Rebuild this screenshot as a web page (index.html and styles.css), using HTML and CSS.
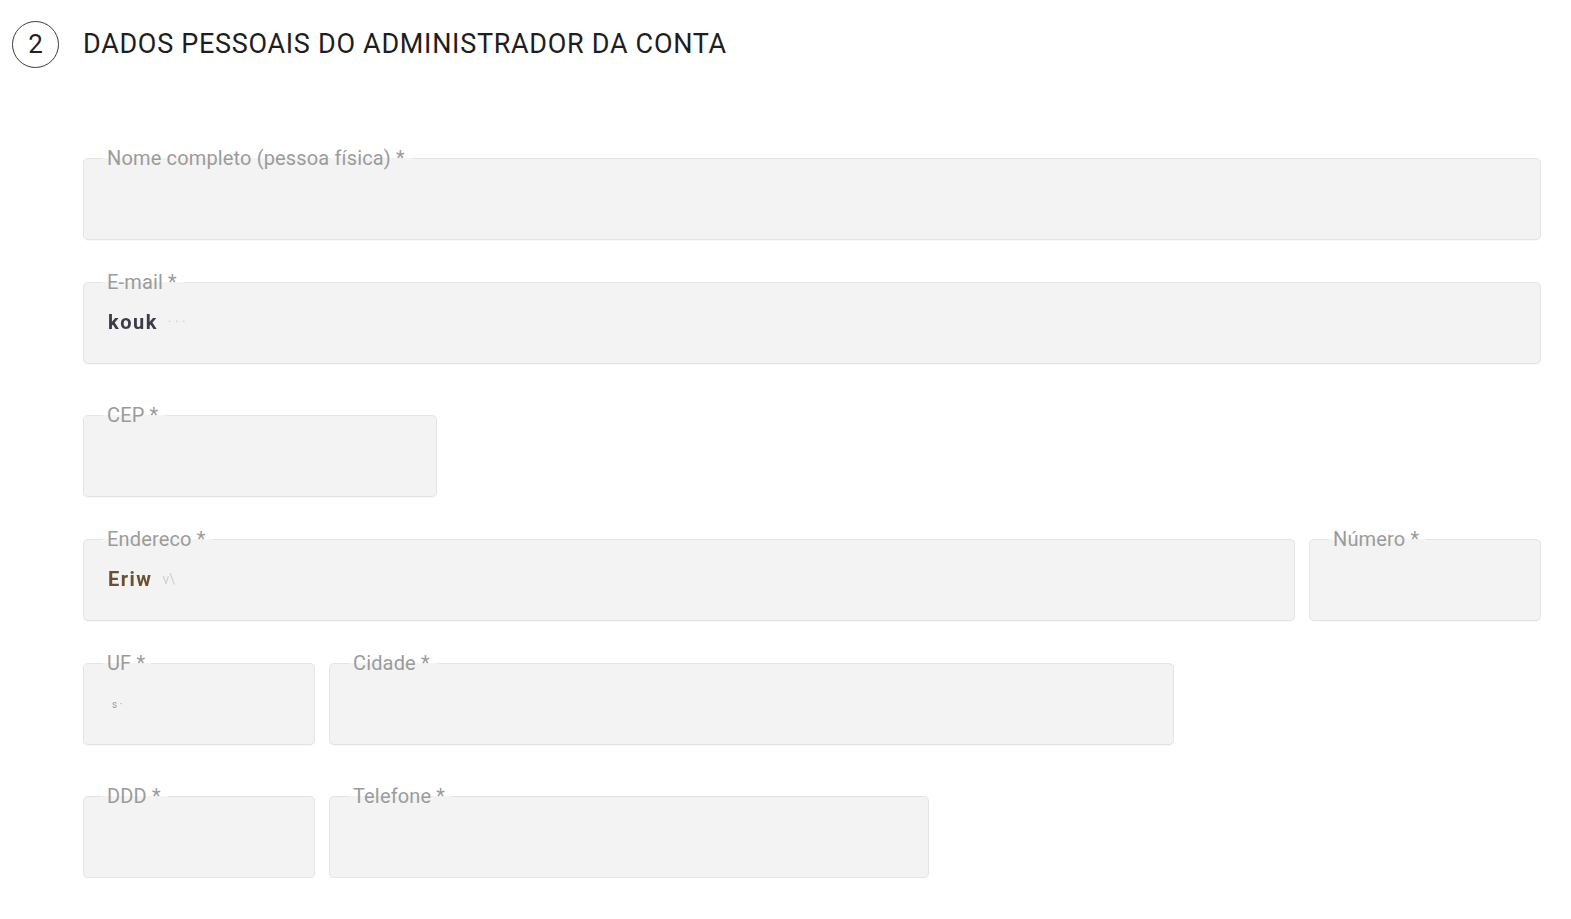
FILE: index.html
```html
<!DOCTYPE html>
<html lang="pt-BR">
<head>
<meta charset="utf-8">
<title>Dados pessoais</title>
<link rel="stylesheet" href="styles.css">
</head>
<body>
<div class="page">
  <header class="section-head">
    <div class="step">2</div>
    <h2 class="section-title">DADOS PESSOAIS DO ADMINISTRADOR DA CONTA</h2>
  </header>

  <form class="form">
    <div class="row gap-a">
      <fieldset class="field w-full">
        <legend>Nome completo (pessoa física) *</legend>
        <div class="value"></div>
      </fieldset>
    </div>

    <div class="row gap-b">
      <fieldset class="field w-full">
        <legend>E-mail *</legend>
        <div class="value"><span class="masked">kouk</span><span class="masked-faint">· · ·</span></div>
      </fieldset>
    </div>

    <div class="row gap-a">
      <fieldset class="field w-cep">
        <legend>CEP *</legend>
        <div class="value"></div>
      </fieldset>
    </div>

    <div class="row gap-a">
      <fieldset class="field w-end">
        <legend>Endereco *</legend>
        <div class="value"><span class="masked masked-brown">Eriw</span><span class="masked-faint">v\</span></div>
      </fieldset>
      <fieldset class="field w-num">
        <legend>Número *</legend>
        <div class="value"></div>
      </fieldset>
    </div>

    <div class="row gap-b">
      <fieldset class="field w-uf">
        <legend>UF *</legend>
        <div class="value"><span class="masked-tiny">s ·</span></div>
      </fieldset>
      <fieldset class="field w-cidade">
        <legend>Cidade *</legend>
        <div class="value"></div>
      </fieldset>
    </div>

    <div class="row">
      <fieldset class="field w-uf">
        <legend>DDD *</legend>
        <div class="value"></div>
      </fieldset>
      <fieldset class="field w-tel">
        <legend>Telefone *</legend>
        <div class="value"></div>
      </fieldset>
    </div>
  </form>
</div>
</body>
</html>
```

FILE: styles.css
```css
html, body {
  margin: 0;
  padding: 0;
  background: #ffffff;
}

body {
  font-family: Roboto, "Liberation Sans", Arial, sans-serif;
  color: #222;
}

.page {
  padding: 21px 0 0 12px;
}

.section-head {
  display: flex;
  align-items: center;
  gap: 24px;
  height: 46px;
}

.step {
  box-sizing: border-box;
  width: 47px;
  height: 47px;
  border: 1.5px solid #3a3a3a;
  border-radius: 50%;
  display: flex;
  align-items: center;
  justify-content: center;
  font-size: 26px;
  color: #222;
  line-height: 1;
}

.section-title {
  margin: 0;
  font-size: 27px;
  font-weight: 400;
  color: #1e1e1e;
  letter-spacing: 0.7px;
  white-space: nowrap;
}

.form {
  margin: 80px 0 0 71px;
  width: 1458px;
}

.row {
  display: flex;
  gap: 14px;
}

.gap-a {
  margin-bottom: 31px;
}

.gap-b {
  margin-bottom: 40px;
}

.field {
  box-sizing: border-box;
  margin: 0;
  padding: 0 19px;
  min-width: 0;
  border: 1px solid #e4e4e4;
  border-radius: 5px;
  background: #f3f3f3;
  box-shadow: 0 1px 1px rgba(0, 0, 0, 0.03);
}

.field legend {
  padding: 0 7px 0 4px;
  font-size: 20px;
  line-height: 22px;
  letter-spacing: 0.15px;
  color: #9b9b9b;
  white-space: nowrap;
}

.value {
  height: 70px;
  padding-bottom: 12px;
  box-sizing: border-box;
  display: flex;
  align-items: center;
  gap: 10px;
  padding-left: 5px;
  font-size: 20px;
}

.masked {
  font-weight: 700;
  color: #3b3b4a;
  letter-spacing: 1.5px;
  filter: blur(0.6px);
}

.masked-brown {
  color: #6a5230;
}

.masked-faint {
  color: #d0d0d0;
  font-size: 14px;
  filter: blur(0.6px);
}

.masked-tiny {
  color: #9a9a9a;
  font-size: 10px;
  filter: blur(0.5px);
  margin-top: 2px;
  padding-left: 4px;
}

.w-full { width: 1458px; }
.w-cep { width: 354px; }
.w-end { width: 1212px; }
.w-num { width: 232px; }
.w-uf { width: 232px; }
.w-cidade { width: 845px; }
.w-tel { width: 600px; }
```
